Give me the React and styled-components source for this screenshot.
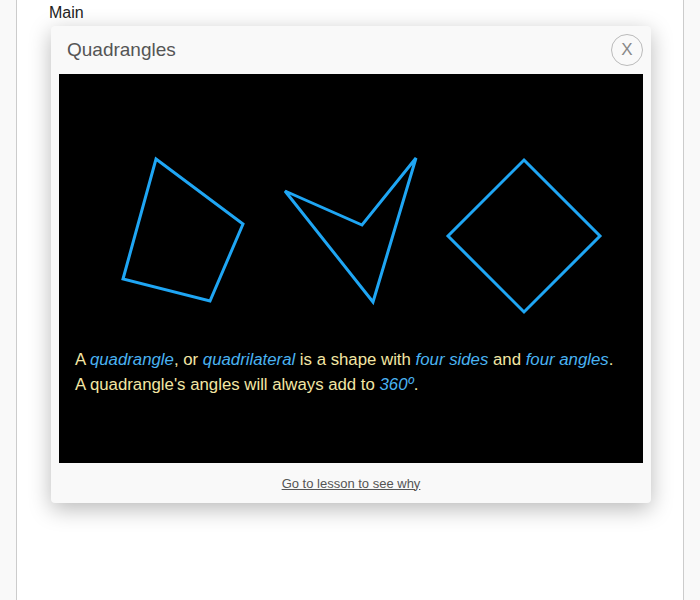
import { createGlobalStyle } from 'styled-components';
import styled from 'styled-components';

const GlobalStyle = createGlobalStyle`
  html, body {
    margin: 0;
    padding: 0;
    background: #f9f9f9;
    font-family: "Liberation Sans", Arial, sans-serif;
  }
`;

// quadrilaterals drawn in the lesson preview, coords inside the 584px frame
const shapes = [
  "97,85 184,150 151,227 64,205",
  "226,117 303,151 357,84 314,228",
  "465,86 541,162 465,238 389,162",
];

function App() {
  return (
    <Page>
      <GlobalStyle />
      <Heading>Main</Heading>
      <Modal>
        <Header>
          <Title>Quadrangles</Title>
          <CloseButton>X</CloseButton>
        </Header>
        <Stage>
          <Drawing width="584" height="260" viewBox="0 0 584 260">
            {shapes.map((pts) => (
              <polygon key={pts} points={pts} />
            ))}
          </Drawing>
          <Caption>
            A <Term>quadrangle</Term>, or <Term>quadrilateral</Term> is a shape with{" "}
            <Term>four sides</Term> and <Term>four angles</Term>.
            <br />
            A quadrangle's angles will always add to <Term>360º</Term>.
          </Caption>
        </Stage>
        <Footer>
          <LessonLink href="#">Go to lesson to see why</LessonLink>
        </Footer>
      </Modal>
    </Page>
  );
}

const Page = styled.div`
  margin: 0 16px;
  min-height: 600px;
  background: #fff;
  border-left: 1px solid #ccc;
  border-right: 1px solid #ccc;
  padding: 4px 0 0 32px;
  box-sizing: border-box;
`;

const Heading = styled.div`
  font-size: 16px;
  line-height: 18px;
  color: #222;
`;

const Modal = styled.div`
  width: 600px;
  margin: 4px 0 0 2px;
  background: #f9f9f9;
  border-radius: 4px;
  box-shadow: 0 6px 22px rgba(0, 0, 0, 0.28);
  padding: 0 8px;
  box-sizing: border-box;
`;

const Header = styled.div`
  display: flex;
  align-items: center;
  justify-content: space-between;
  height: 48px;
  padding: 0 0 0 8px;
`;

const Title = styled.div`
  font-size: 19px;
  color: #555;
`;

const CloseButton = styled.button`
  width: 32px;
  height: 32px;
  border-radius: 50%;
  border: 1px solid #bbb;
  background: transparent;
  color: #888;
  font-family: "Liberation Sans", Arial, sans-serif;
  font-size: 17px;
  font-weight: 300;
  padding: 0;
  display: flex;
  align-items: center;
  justify-content: center;
`;

const Stage = styled.div`
  background: #000;
  height: 389px;
  display: flex;
  flex-direction: column;
`;

const Drawing = styled.svg`
  display: block;
  polygon {
    fill: none;
    stroke: #1fa6f4;
    stroke-width: 3;
  }
`;

const Caption = styled.p`
  margin: 13px 0 0;
  padding: 0 16px;
  font-size: 16.8px;
  line-height: 25px;
  color: #f3e6a4;
`;

const Term = styled.em`
  color: #4ab3f2;
`;

const Footer = styled.div`
  height: 40px;
  display: flex;
  align-items: center;
  justify-content: center;
`;

const LessonLink = styled.a`
  font-size: 13px;
  color: #555;
  text-decoration: underline;
`;

export default App;
